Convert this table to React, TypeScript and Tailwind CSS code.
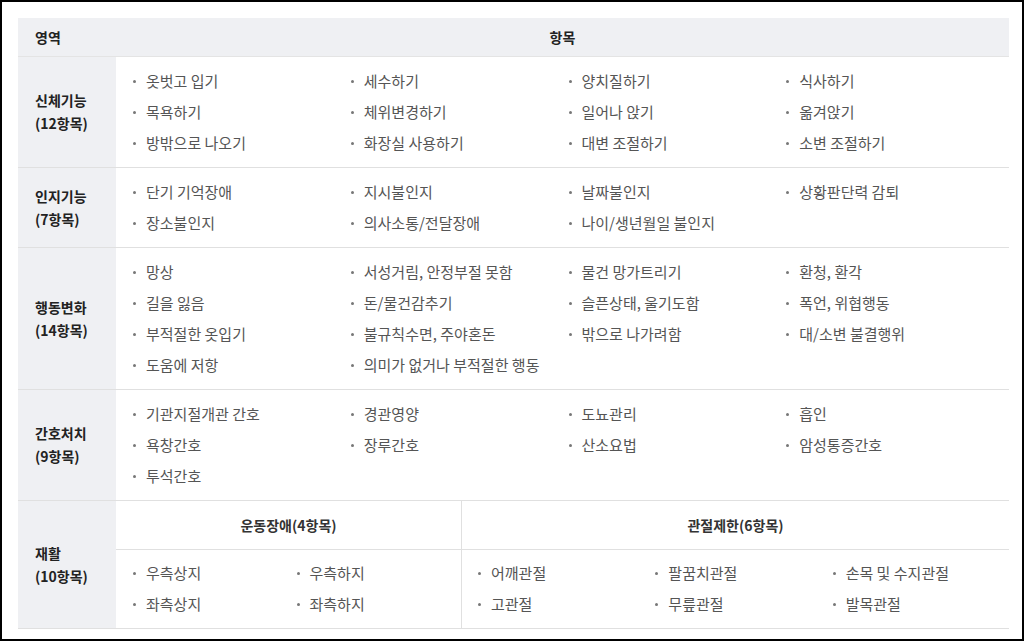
const rows = [
  {
    name: "신체기능",
    count: "(12항목)",
    items: [
      "옷벗고 입기",
      "세수하기",
      "양치질하기",
      "식사하기",
      "목욕하기",
      "체위변경하기",
      "일어나 앉기",
      "옮겨앉기",
      "방밖으로 나오기",
      "화장실 사용하기",
      "대변 조절하기",
      "소변 조절하기",
    ],
  },
  {
    name: "인지기능",
    count: "(7항목)",
    items: [
      "단기 기억장애",
      "지시불인지",
      "날짜불인지",
      "상황판단력 감퇴",
      "장소불인지",
      "의사소통/전달장애",
      "나이/생년월일 불인지",
    ],
  },
  {
    name: "행동변화",
    count: "(14항목)",
    items: [
      "망상",
      "서성거림, 안정부절 못함",
      "물건 망가트리기",
      "환청, 환각",
      "길을 잃음",
      "돈/물건감추기",
      "슬픈상태, 울기도함",
      "폭언, 위협행동",
      "부적절한 옷입기",
      "불규칙수면, 주야혼돈",
      "밖으로 나가려함",
      "대/소변 불결행위",
      "도움에 저항",
      "의미가 없거나 부적절한 행동",
    ],
  },
  {
    name: "간호처치",
    count: "(9항목)",
    items: [
      "기관지절개관 간호",
      "경관영양",
      "도뇨관리",
      "흡인",
      "욕창간호",
      "장루간호",
      "산소요법",
      "암성통증간호",
      "투석간호",
    ],
  },
];

const motor = ["우측상지", "우측하지", "좌측상지", "좌측하지"];
const joints = [
  "어깨관절",
  "팔꿈치관절",
  "손목 및 수지관절",
  "고관절",
  "무릎관절",
  "발목관절",
];

function Item({ text }: { text: string }) {
  return (
    <div className="h-[31px] flex items-center text-[#555] text-[15px]">
      <span className="w-[3px] h-[3px] rounded-full bg-[#777] ml-[1px] mr-[10px] shrink-0" />
      <span className="whitespace-nowrap">{text}</span>
    </div>
  );
}

function Label({ name, count }: { name: string; count: string }) {
  return (
    <div className="w-[98px] shrink-0 bg-[#eff0f3] flex flex-col justify-center pl-[17px] font-bold text-[#222] leading-[23px]">
      <span>{name}</span>
      <span>{count}</span>
    </div>
  );
}

export default function App() {
  return (
    <div
      className="w-[1024px] h-[641px] border-2 border-black bg-white pt-4 pl-4 text-[14px]"
      style={{ fontFamily: '"Noto Sans CJK KR", "Noto Sans", sans-serif' }}
    >
      <div className="w-[991px]">
        {/* header */}
        <div className="flex h-[39px] bg-[#eff0f3] border-b border-[#e4e4e4] font-bold text-[#222]">
          <div className="w-[98px] pl-[17px] flex items-center">영역</div>
          <div className="flex-1 flex items-center justify-center">항목</div>
        </div>

        {rows.map((row) => (
          <div key={row.name} className="flex border-b border-[#e0e0e0]">
            <Label name={row.name} count={row.count} />
            <div className="flex-1 grid grid-cols-4 pl-[16px] pr-[6px] pt-[9px] pb-[8px]">
              {row.items.map((it) => (
                <Item key={it} text={it} />
              ))}
            </div>
          </div>
        ))}

        {/* 재활 */}
        <div className="flex border-b border-[#e0e0e0]">
          <Label name="재활" count="(10항목)" />
          <div className="flex-1 flex">
            <div className="w-[345px] flex flex-col">
              <div className="h-[49px] flex items-center justify-center font-bold text-[#333] border-b border-[#e0e0e0]">
                운동장애(4항목)
              </div>
              <div className="grid grid-cols-2 pl-[16px] pr-[2px] pt-[8px] pb-[8px]">
                {motor.map((it) => (
                  <Item key={it} text={it} />
                ))}
              </div>
            </div>
            <div className="flex-1 flex flex-col border-l border-[#e0e0e0]">
              <div className="h-[49px] flex items-center justify-center font-bold text-[#333] border-b border-[#e0e0e0]">
                관절제한(6항목)
              </div>
              <div className="grid grid-cols-3 pl-[15px] pt-[8px] pb-[8px]">
                {joints.map((it) => (
                  <Item key={it} text={it} />
                ))}
              </div>
            </div>
          </div>
        </div>
      </div>
    </div>
  );
}
